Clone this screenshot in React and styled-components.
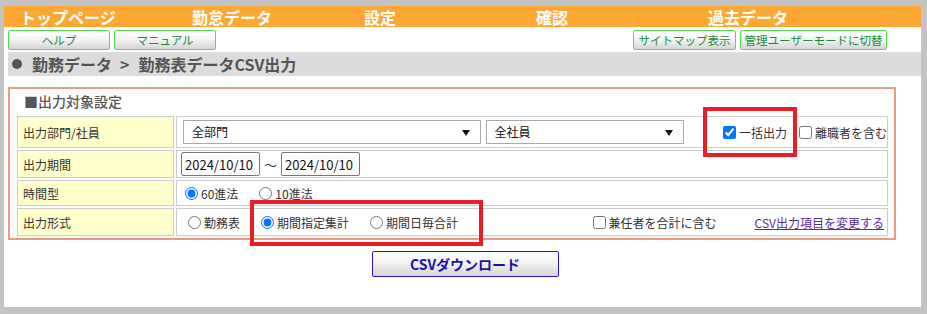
import styled, { createGlobalStyle } from 'styled-components';

const GlobalStyle = createGlobalStyle`
  html, body { margin: 0; padding: 0; }
  body {
    font-family: "Noto Sans CJK JP", "Noto Sans", sans-serif;
    color: #333;
  }
`;

const Frame = styled.div`
  width: 927px;
  height: 314px;
  box-sizing: border-box;
  background: #c3c3c3;
  padding: 6px 6px 7px 4px;
`;

const Page = styled.div`
  position: relative;
  height: 100%;
  background: #fff;
  overflow: hidden;
`;

const Nav = styled.div`
  display: grid;
  grid-template-columns: repeat(5, 172px);
  align-items: center;
  height: 21px;
  padding-left: 16px;
  background: #fda834;
`;

const NavItem = styled.div`
  color: #fff;
  font-weight: 700;
  font-size: 16px;
  line-height: 18px;
  white-space: nowrap;
`;

const ButtonRow = styled.div`
  display: flex;
  justify-content: space-between;
  padding: 3px 34px 0 4px;
  height: 20px;
`;

const Group = styled.div`
  display: flex;
  gap: 4px;
`;

const SubButton = styled.button`
  width: ${p => (p.$w ? p.$w + 'px' : 'auto')};
  height: 20px;
  padding: 0 3px;
  border: 1px solid #52e052;
  border-radius: 2px;
  background: linear-gradient(#ffffff, #f4f4f4 45%, #d6d6d6);
  color: #1e8a3a;
  font-family: inherit;
  font-size: 11.5px;
  line-height: 18px;
  white-space: nowrap;
`;

const Breadcrumb = styled.div`
  display: flex;
  align-items: center;
  margin: 2px 0 0 4px;
  height: 24px;
  padding-left: 2px;
  background: #dcdcdc;
  color: #555;
  font-size: 16px;
  font-weight: 700;
  white-space: nowrap;
`;

const Bullet = styled.span`
  width: 10px;
  height: 10px;
  margin: 0 10px 0 2px;
  border-radius: 50%;
  background: #555;
`;

const Sep = styled.span`
  margin: 0 9px 0 8px;
`;

const Panel = styled.div`
  margin: 11px 25px 0 4px;
  height: 153px;
  box-sizing: border-box;
  border: 2px solid #ec9b80;
`;

const PanelTitle = styled.div`
  height: 25px;
  padding-left: 14px;
  font-size: 14px;
  line-height: 25px;
  font-weight: 500;
  color: #555;
`;

const Table = styled.div`
  display: grid;
  grid-template-columns: 157px 712px;
  grid-template-rows: 32px 28px 26px 28px;
  gap: 2px;
  margin: 2px 6px 0 7px;
`;

const Label = styled.div`
  display: flex;
  align-items: center;
  box-sizing: border-box;
  padding-left: 5px;
  border: 1px solid #cccccc;
  background: #ffffcc;
  font-size: 12px;
  color: #333;
`;

const Value = styled.div`
  display: flex;
  align-items: center;
  box-sizing: border-box;
  padding-left: ${p => p.$pad || 3}px;
  border: 1px solid #cccccc;
  font-size: 12px;
  color: #333;
  white-space: nowrap;
`;

const SelectBox = styled.div`
  position: relative;
  width: ${p => p.$w}px;
  height: 24px;
  box-sizing: border-box;
  margin-right: 5px;
  padding-left: 8px;
  border: 1px solid #a9a9a9;
  font-size: 12px;
  line-height: 22px;
  color: #111;
  &::after {
    content: '';
    position: absolute;
    right: 10px;
    top: 9px;
    border-left: 4px solid transparent;
    border-right: 4px solid transparent;
    border-top: 6px solid #111;
  }
`;

const Check = styled.label`
  display: flex;
  align-items: center;
  margin-left: ${p => p.$ml || 0}px;
  margin-right: ${p => p.$mr || 0}px;
  input { margin: 0 3px 0 4px; width: 13px; height: 13px; }
`;

const Radio = styled.label`
  display: flex;
  align-items: center;
  margin-right: 16px;
  input { margin: 0 3px 0 5px; width: 13px; height: 13px; }
`;

const DateInput = styled.input`
  width: 79px;
  height: 24px;
  box-sizing: border-box;
  padding: 0 3px;
  border: 1px solid #767676;
  border-radius: 2px;
  font-family: inherit;
  font-size: 13px;
  color: #111;
`;

const Tilde = styled.span`
  margin: 0 4px;
  font-size: 13px;
`;

const Spacer = styled.div`
  flex: 1;
`;

const Link = styled.a`
  margin-right: 3px;
  color: #5b2a9e;
  font-size: 12px;
  text-decoration: underline;
`;

const Actions = styled.div`
  display: flex;
  justify-content: center;
  padding-left: 5px;
  margin-top: 11px;
`;

const DownloadButton = styled.button`
  width: 187px;
  height: 26px;
  border: 1px solid #2a10dd;
  border-radius: 2px;
  background: linear-gradient(#ffffff, #f3f3f3 45%, #d4d4d4);
  color: #1c10b0;
  font-family: inherit;
  font-size: 14px;
  font-weight: 700;
`;

const Highlight = styled.div`
  position: absolute;
  left: ${p => p.$x}px;
  top: ${p => p.$y}px;
  width: ${p => p.$w}px;
  height: ${p => p.$h}px;
  box-sizing: border-box;
  border: 4px solid #ea1c24;
  pointer-events: none;
`;

const navItems = ['トップページ', '勤怠データ', '設定', '確認', '過去データ'];

export default function App() {
  return (
    <>
      <GlobalStyle />
      <Frame>
        <Page>
          <Nav>
            {navItems.map(n => <NavItem key={n}>{n}</NavItem>)}
          </Nav>

          <ButtonRow>
            <Group>
              <SubButton $w={102}>ヘルプ</SubButton>
              <SubButton $w={102}>マニュアル</SubButton>
            </Group>
            <Group>
              <SubButton $w={103}>サイトマップ表示</SubButton>
              <SubButton $w={147}>管理ユーザーモードに切替</SubButton>
            </Group>
          </ButtonRow>

          <Breadcrumb>
            <Bullet />勤務データ<Sep>&gt;</Sep>勤務表データCSV出力
          </Breadcrumb>

          <Panel>
            <PanelTitle>■出力対象設定</PanelTitle>
            <Table>
              <Label>出力部門/社員</Label>
              <Value $pad={6}>
                <SelectBox $w={300}>全部門</SelectBox>
                <SelectBox $w={200}>全社員</SelectBox>
                <Check $ml={30}><input type="checkbox" defaultChecked />一括出力</Check>
                <Check $ml={8}><input type="checkbox" />離職者を含む</Check>
              </Value>

              <Label>出力期間</Label>
              <Value $pad={4}>
                <DateInput readOnly value="2024/10/10" />
                <Tilde>～</Tilde>
                <DateInput readOnly value="2024/10/10" />
              </Value>

              <Label>時間型</Label>
              <Value $pad={3}>
                <Radio><input type="radio" name="jikan" defaultChecked />60進法</Radio>
                <Radio><input type="radio" name="jikan" />10進法</Radio>
              </Value>

              <Label>出力形式</Label>
              <Value $pad={6}>
                <Radio><input type="radio" name="keishiki" />勤務表</Radio>
                <Radio><input type="radio" name="keishiki" defaultChecked />期間指定集計</Radio>
                <Radio><input type="radio" name="keishiki" />期間日毎合計</Radio>
                <Spacer />
                <Check $mr={38}><input type="checkbox" />兼任者を合計に含む</Check>
                <Link href="#">CSV出力項目を変更する</Link>
              </Value>
            </Table>
          </Panel>

          <Actions>
            <DownloadButton>CSVダウンロード</DownloadButton>
          </Actions>

          <Highlight $x={699} $y={101} $w={94} $h={50} />
          <Highlight $x={246} $y={194} $w={233} $h={46} />
        </Page>
      </Frame>
    </>
  );
}
